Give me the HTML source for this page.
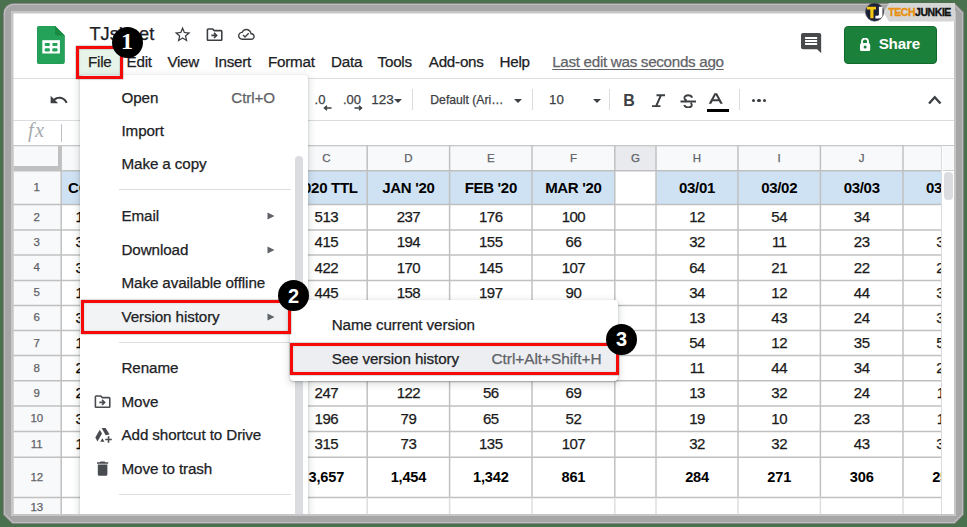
<!DOCTYPE html><html><head><meta charset="utf-8"><style>body{margin:0;width:967px;height:527px;overflow:hidden;position:relative;background:#4a714e;font-family:"Liberation Sans",sans-serif}div{box-sizing:border-box}</style></head><body>
<svg style="position:absolute;left:0;top:0" width="967" height="527" viewBox="0 0 967 527"><path d="M13.00 3.00H955.00L964.00 12.00V515.00L955.00 524.00H12.00L3.00 515.00V13.00A10.00 10.00 0 0 1 13.00 3.00Z" fill="#767676"/><path d="M13.32 3.80H954.52L963.20 12.48V514.52L954.52 523.20H12.48L3.80 514.52V13.32A9.52 9.52 0 0 1 13.32 3.80Z" fill="#bdbdbd"/><path d="M13.80 5.00H953.80L962.00 13.20V513.80L953.80 522.00H13.20L5.00 513.80V13.80A8.80 8.80 0 0 1 13.80 5.00Z" fill="#a6a6a6"/></svg>
<div style="position:absolute;left:11.40px;top:11.40px;width:944.80px;height:504.80px;background:#c6c6c6;"></div>
<div style="position:absolute;left:13.50px;top:13.80px;width:940.50px;height:500.20px;background:#fff;"></div>
<div style="position:absolute;left:0;top:0;width:967px;height:527px;clip-path:inset(13.5px 13px 13px 13.5px)">
<div style="position:absolute;left:13.00px;top:145.50px;width:947.00px;height:25.30px;background:#f8f9fa;"></div>
<div style="position:absolute;left:614.80px;top:145.50px;width:41.20px;height:25.30px;background:#e8eaed;"></div>
<div style="position:absolute;left:13.00px;top:170.80px;width:48.00px;height:356.20px;background:#f8f9fa;"></div>
<div style="position:absolute;left:61.00px;top:170.80px;width:553.80px;height:33.60px;background:#cfe2f3;"></div>
<div style="position:absolute;left:656.00px;top:170.80px;width:304.00px;height:33.60px;background:#cfe2f3;"></div>
<svg style="position:absolute;left:0;top:0" width="967" height="527" viewBox="0 0 967 527"><line x1="13" y1="145.4" x2="960" y2="145.4" stroke="#c0c0c0" stroke-width="1.5"/><line x1="13" y1="170.7" x2="960" y2="170.7" stroke="#c0c0c0" stroke-width="1.5"/><line x1="13" y1="204.4" x2="960" y2="204.4" stroke="#c0c0c0" stroke-width="1.5"/><line x1="13" y1="229.9" x2="960" y2="229.9" stroke="#c0c0c0" stroke-width="1.5"/><line x1="13" y1="255.0" x2="960" y2="255.0" stroke="#c0c0c0" stroke-width="1.5"/><line x1="13" y1="280.4" x2="960" y2="280.4" stroke="#c0c0c0" stroke-width="1.5"/><line x1="13" y1="305.5" x2="960" y2="305.5" stroke="#c0c0c0" stroke-width="1.5"/><line x1="13" y1="330.6" x2="960" y2="330.6" stroke="#c0c0c0" stroke-width="1.5"/><line x1="13" y1="355.6" x2="960" y2="355.6" stroke="#c0c0c0" stroke-width="1.5"/><line x1="13" y1="380.8" x2="960" y2="380.8" stroke="#c0c0c0" stroke-width="1.5"/><line x1="13" y1="406.1" x2="960" y2="406.1" stroke="#c0c0c0" stroke-width="1.5"/><line x1="13" y1="431.6" x2="960" y2="431.6" stroke="#c0c0c0" stroke-width="1.5"/><line x1="13" y1="457.2" x2="960" y2="457.2" stroke="#c0c0c0" stroke-width="1.5"/><line x1="13" y1="497.4" x2="960" y2="497.4" stroke="#c0c0c0" stroke-width="1.5"/><line x1="13" y1="523" x2="960" y2="523" stroke="#c0c0c0" stroke-width="1.5"/><line x1="13" y1="145.4" x2="13" y2="497.4" stroke="#c0c0c0" stroke-width="1.5"/><line x1="13" y1="497.4" x2="13" y2="527" stroke="#c0c0c0" stroke-width="1.5"/><line x1="61.2" y1="145.4" x2="61.2" y2="497.4" stroke="#c0c0c0" stroke-width="1.5"/><line x1="61.2" y1="497.4" x2="61.2" y2="527" stroke="#c0c0c0" stroke-width="1.5"/><line x1="200" y1="145.4" x2="200" y2="497.4" stroke="#c0c0c0" stroke-width="1.5"/><line x1="200" y1="497.4" x2="200" y2="527" stroke="#dedede" stroke-width="1.5"/><line x1="285.5" y1="145.4" x2="285.5" y2="497.4" stroke="#c0c0c0" stroke-width="1.5"/><line x1="285.5" y1="497.4" x2="285.5" y2="527" stroke="#dedede" stroke-width="1.5"/><line x1="367.2" y1="145.4" x2="367.2" y2="497.4" stroke="#c0c0c0" stroke-width="1.5"/><line x1="367.2" y1="497.4" x2="367.2" y2="527" stroke="#dedede" stroke-width="1.5"/><line x1="449.6" y1="145.4" x2="449.6" y2="497.4" stroke="#c0c0c0" stroke-width="1.5"/><line x1="449.6" y1="497.4" x2="449.6" y2="527" stroke="#dedede" stroke-width="1.5"/><line x1="532.0" y1="145.4" x2="532.0" y2="497.4" stroke="#c0c0c0" stroke-width="1.5"/><line x1="532.0" y1="497.4" x2="532.0" y2="527" stroke="#dedede" stroke-width="1.5"/><line x1="614.8" y1="145.4" x2="614.8" y2="497.4" stroke="#c0c0c0" stroke-width="1.5"/><line x1="614.8" y1="497.4" x2="614.8" y2="527" stroke="#dedede" stroke-width="1.5"/><line x1="656.0" y1="145.4" x2="656.0" y2="497.4" stroke="#c0c0c0" stroke-width="1.5"/><line x1="656.0" y1="497.4" x2="656.0" y2="527" stroke="#dedede" stroke-width="1.5"/><line x1="738.0" y1="145.4" x2="738.0" y2="497.4" stroke="#c0c0c0" stroke-width="1.5"/><line x1="738.0" y1="497.4" x2="738.0" y2="527" stroke="#dedede" stroke-width="1.5"/><line x1="820.4" y1="145.4" x2="820.4" y2="497.4" stroke="#c0c0c0" stroke-width="1.5"/><line x1="820.4" y1="497.4" x2="820.4" y2="527" stroke="#dedede" stroke-width="1.5"/><line x1="903.0" y1="145.4" x2="903.0" y2="497.4" stroke="#c0c0c0" stroke-width="1.5"/><line x1="903.0" y1="497.4" x2="903.0" y2="527" stroke="#dedede" stroke-width="1.5"/><line x1="985" y1="145.4" x2="985" y2="497.4" stroke="#c0c0c0" stroke-width="1.5"/><line x1="985" y1="497.4" x2="985" y2="527" stroke="#dedede" stroke-width="1.5"/></svg>
<div style="position:absolute;left:13.00px;top:166.00px;width:48.00px;height:4.00px;background:#c0c0c0;"></div>
<div style="position:absolute;left:57.50px;top:145.50px;width:3.50px;height:24.50px;background:#c0c0c0;"></div>
<div style="position:absolute;left:-69.40px;width:400px;text-align:center;top:152.72px;font-size:11.5px;line-height:11.5px;color:#5f6368;font-weight:normal;white-space:nowrap;font-family:'Liberation Sans', sans-serif;-webkit-text-stroke:0.25px currentColor;">A</div>
<div style="position:absolute;left:42.75px;width:400px;text-align:center;top:152.72px;font-size:11.5px;line-height:11.5px;color:#5f6368;font-weight:normal;white-space:nowrap;font-family:'Liberation Sans', sans-serif;-webkit-text-stroke:0.25px currentColor;">B</div>
<div style="position:absolute;left:126.35px;width:400px;text-align:center;top:152.72px;font-size:11.5px;line-height:11.5px;color:#5f6368;font-weight:normal;white-space:nowrap;font-family:'Liberation Sans', sans-serif;-webkit-text-stroke:0.25px currentColor;">C</div>
<div style="position:absolute;left:208.40px;width:400px;text-align:center;top:152.72px;font-size:11.5px;line-height:11.5px;color:#5f6368;font-weight:normal;white-space:nowrap;font-family:'Liberation Sans', sans-serif;-webkit-text-stroke:0.25px currentColor;">D</div>
<div style="position:absolute;left:290.80px;width:400px;text-align:center;top:152.72px;font-size:11.5px;line-height:11.5px;color:#5f6368;font-weight:normal;white-space:nowrap;font-family:'Liberation Sans', sans-serif;-webkit-text-stroke:0.25px currentColor;">E</div>
<div style="position:absolute;left:373.40px;width:400px;text-align:center;top:152.72px;font-size:11.5px;line-height:11.5px;color:#5f6368;font-weight:normal;white-space:nowrap;font-family:'Liberation Sans', sans-serif;-webkit-text-stroke:0.25px currentColor;">F</div>
<div style="position:absolute;left:435.40px;width:400px;text-align:center;top:152.72px;font-size:11.5px;line-height:11.5px;color:#5f6368;font-weight:normal;white-space:nowrap;font-family:'Liberation Sans', sans-serif;-webkit-text-stroke:0.25px currentColor;">G</div>
<div style="position:absolute;left:497.00px;width:400px;text-align:center;top:152.72px;font-size:11.5px;line-height:11.5px;color:#5f6368;font-weight:normal;white-space:nowrap;font-family:'Liberation Sans', sans-serif;-webkit-text-stroke:0.25px currentColor;">H</div>
<div style="position:absolute;left:579.20px;width:400px;text-align:center;top:152.72px;font-size:11.5px;line-height:11.5px;color:#5f6368;font-weight:normal;white-space:nowrap;font-family:'Liberation Sans', sans-serif;-webkit-text-stroke:0.25px currentColor;">I</div>
<div style="position:absolute;left:661.70px;width:400px;text-align:center;top:152.72px;font-size:11.5px;line-height:11.5px;color:#5f6368;font-weight:normal;white-space:nowrap;font-family:'Liberation Sans', sans-serif;-webkit-text-stroke:0.25px currentColor;">J</div>
<div style="position:absolute;left:-163.20px;width:400px;text-align:center;top:181.97px;font-size:11.5px;line-height:11.5px;color:#5f6368;font-weight:normal;white-space:nowrap;font-family:'Liberation Sans', sans-serif;-webkit-text-stroke:0.25px currentColor;">1</div>
<div style="position:absolute;left:-163.20px;width:400px;text-align:center;top:211.57px;font-size:11.5px;line-height:11.5px;color:#5f6368;font-weight:normal;white-space:nowrap;font-family:'Liberation Sans', sans-serif;-webkit-text-stroke:0.25px currentColor;">2</div>
<div style="position:absolute;left:-163.20px;width:400px;text-align:center;top:236.87px;font-size:11.5px;line-height:11.5px;color:#5f6368;font-weight:normal;white-space:nowrap;font-family:'Liberation Sans', sans-serif;-webkit-text-stroke:0.25px currentColor;">3</div>
<div style="position:absolute;left:-163.20px;width:400px;text-align:center;top:262.12px;font-size:11.5px;line-height:11.5px;color:#5f6368;font-weight:normal;white-space:nowrap;font-family:'Liberation Sans', sans-serif;-webkit-text-stroke:0.25px currentColor;">4</div>
<div style="position:absolute;left:-163.20px;width:400px;text-align:center;top:287.38px;font-size:11.5px;line-height:11.5px;color:#5f6368;font-weight:normal;white-space:nowrap;font-family:'Liberation Sans', sans-serif;-webkit-text-stroke:0.25px currentColor;">5</div>
<div style="position:absolute;left:-163.20px;width:400px;text-align:center;top:312.48px;font-size:11.5px;line-height:11.5px;color:#5f6368;font-weight:normal;white-space:nowrap;font-family:'Liberation Sans', sans-serif;-webkit-text-stroke:0.25px currentColor;">6</div>
<div style="position:absolute;left:-163.20px;width:400px;text-align:center;top:337.53px;font-size:11.5px;line-height:11.5px;color:#5f6368;font-weight:normal;white-space:nowrap;font-family:'Liberation Sans', sans-serif;-webkit-text-stroke:0.25px currentColor;">7</div>
<div style="position:absolute;left:-163.20px;width:400px;text-align:center;top:362.63px;font-size:11.5px;line-height:11.5px;color:#5f6368;font-weight:normal;white-space:nowrap;font-family:'Liberation Sans', sans-serif;-webkit-text-stroke:0.25px currentColor;">8</div>
<div style="position:absolute;left:-163.20px;width:400px;text-align:center;top:387.88px;font-size:11.5px;line-height:11.5px;color:#5f6368;font-weight:normal;white-space:nowrap;font-family:'Liberation Sans', sans-serif;-webkit-text-stroke:0.25px currentColor;">9</div>
<div style="position:absolute;left:-163.20px;width:400px;text-align:center;top:413.28px;font-size:11.5px;line-height:11.5px;color:#5f6368;font-weight:normal;white-space:nowrap;font-family:'Liberation Sans', sans-serif;-webkit-text-stroke:0.25px currentColor;">10</div>
<div style="position:absolute;left:-163.20px;width:400px;text-align:center;top:438.82px;font-size:11.5px;line-height:11.5px;color:#5f6368;font-weight:normal;white-space:nowrap;font-family:'Liberation Sans', sans-serif;-webkit-text-stroke:0.25px currentColor;">11</div>
<div style="position:absolute;left:-163.20px;width:400px;text-align:center;top:471.72px;font-size:11.5px;line-height:11.5px;color:#5f6368;font-weight:normal;white-space:nowrap;font-family:'Liberation Sans', sans-serif;-webkit-text-stroke:0.25px currentColor;">12</div>
<div style="position:absolute;left:-163.20px;width:400px;text-align:center;top:502.23px;font-size:11.5px;line-height:11.5px;color:#5f6368;font-weight:normal;white-space:nowrap;font-family:'Liberation Sans', sans-serif;-webkit-text-stroke:0.25px currentColor;">13</div>
<div style="position:absolute;left:68.00px;top:179.50px;font-size:15px;line-height:15px;color:#000;font-weight:bold;white-space:nowrap;font-family:'Liberation Sans', sans-serif;">CO</div>
<div style="position:absolute;left:126.35px;width:400px;text-align:center;top:180.00px;font-size:15px;line-height:15px;color:#000;font-weight:bold;white-space:nowrap;font-family:'Liberation Sans', sans-serif;letter-spacing:-0.3px;">2020 TTL</div>
<div style="position:absolute;left:208.40px;width:400px;text-align:center;top:180.00px;font-size:15px;line-height:15px;color:#000;font-weight:bold;white-space:nowrap;font-family:'Liberation Sans', sans-serif;letter-spacing:-0.3px;">JAN '20</div>
<div style="position:absolute;left:290.80px;width:400px;text-align:center;top:180.00px;font-size:15px;line-height:15px;color:#000;font-weight:bold;white-space:nowrap;font-family:'Liberation Sans', sans-serif;letter-spacing:-0.3px;">FEB '20</div>
<div style="position:absolute;left:373.40px;width:400px;text-align:center;top:180.00px;font-size:15px;line-height:15px;color:#000;font-weight:bold;white-space:nowrap;font-family:'Liberation Sans', sans-serif;letter-spacing:-0.3px;">MAR '20</div>
<div style="position:absolute;left:497.00px;width:400px;text-align:center;top:180.00px;font-size:15px;line-height:15px;color:#000;font-weight:bold;white-space:nowrap;font-family:'Liberation Sans', sans-serif;letter-spacing:-0.3px;">03/01</div>
<div style="position:absolute;left:579.20px;width:400px;text-align:center;top:180.00px;font-size:15px;line-height:15px;color:#000;font-weight:bold;white-space:nowrap;font-family:'Liberation Sans', sans-serif;letter-spacing:-0.3px;">03/02</div>
<div style="position:absolute;left:661.70px;width:400px;text-align:center;top:180.00px;font-size:15px;line-height:15px;color:#000;font-weight:bold;white-space:nowrap;font-family:'Liberation Sans', sans-serif;letter-spacing:-0.3px;">03/03</div>
<div style="position:absolute;left:744.00px;width:400px;text-align:center;top:180.00px;font-size:15px;line-height:15px;color:#000;font-weight:bold;white-space:nowrap;font-family:'Liberation Sans', sans-serif;letter-spacing:-0.3px;">03/04</div>
<div style="position:absolute;left:75.50px;top:209.10px;font-size:15px;line-height:15px;color:#000;font-weight:normal;white-space:nowrap;font-family:'Liberation Sans', sans-serif;-webkit-text-stroke:0.25px currentColor;">1</div>
<div style="position:absolute;left:126.35px;width:400px;text-align:center;top:209.10px;font-size:15px;line-height:15px;color:#1a1a1a;font-weight:normal;white-space:nowrap;font-family:'Liberation Sans', sans-serif;-webkit-text-stroke:0.25px currentColor;letter-spacing:-0.5px;">513</div>
<div style="position:absolute;left:208.40px;width:400px;text-align:center;top:209.10px;font-size:15px;line-height:15px;color:#1a1a1a;font-weight:normal;white-space:nowrap;font-family:'Liberation Sans', sans-serif;-webkit-text-stroke:0.25px currentColor;letter-spacing:-0.5px;">237</div>
<div style="position:absolute;left:290.80px;width:400px;text-align:center;top:209.10px;font-size:15px;line-height:15px;color:#1a1a1a;font-weight:normal;white-space:nowrap;font-family:'Liberation Sans', sans-serif;-webkit-text-stroke:0.25px currentColor;letter-spacing:-0.5px;">176</div>
<div style="position:absolute;left:373.40px;width:400px;text-align:center;top:209.10px;font-size:15px;line-height:15px;color:#1a1a1a;font-weight:normal;white-space:nowrap;font-family:'Liberation Sans', sans-serif;-webkit-text-stroke:0.25px currentColor;letter-spacing:-0.5px;">100</div>
<div style="position:absolute;left:497.00px;width:400px;text-align:center;top:209.10px;font-size:15px;line-height:15px;color:#1a1a1a;font-weight:normal;white-space:nowrap;font-family:'Liberation Sans', sans-serif;-webkit-text-stroke:0.25px currentColor;letter-spacing:-0.5px;">12</div>
<div style="position:absolute;left:579.20px;width:400px;text-align:center;top:209.10px;font-size:15px;line-height:15px;color:#1a1a1a;font-weight:normal;white-space:nowrap;font-family:'Liberation Sans', sans-serif;-webkit-text-stroke:0.25px currentColor;letter-spacing:-0.5px;">54</div>
<div style="position:absolute;left:661.70px;width:400px;text-align:center;top:209.10px;font-size:15px;line-height:15px;color:#1a1a1a;font-weight:normal;white-space:nowrap;font-family:'Liberation Sans', sans-serif;-webkit-text-stroke:0.25px currentColor;letter-spacing:-0.5px;">34</div>
<div style="position:absolute;left:75.50px;top:234.40px;font-size:15px;line-height:15px;color:#000;font-weight:normal;white-space:nowrap;font-family:'Liberation Sans', sans-serif;-webkit-text-stroke:0.25px currentColor;">3</div>
<div style="position:absolute;left:126.35px;width:400px;text-align:center;top:234.40px;font-size:15px;line-height:15px;color:#1a1a1a;font-weight:normal;white-space:nowrap;font-family:'Liberation Sans', sans-serif;-webkit-text-stroke:0.25px currentColor;letter-spacing:-0.5px;">415</div>
<div style="position:absolute;left:208.40px;width:400px;text-align:center;top:234.40px;font-size:15px;line-height:15px;color:#1a1a1a;font-weight:normal;white-space:nowrap;font-family:'Liberation Sans', sans-serif;-webkit-text-stroke:0.25px currentColor;letter-spacing:-0.5px;">194</div>
<div style="position:absolute;left:290.80px;width:400px;text-align:center;top:234.40px;font-size:15px;line-height:15px;color:#1a1a1a;font-weight:normal;white-space:nowrap;font-family:'Liberation Sans', sans-serif;-webkit-text-stroke:0.25px currentColor;letter-spacing:-0.5px;">155</div>
<div style="position:absolute;left:373.40px;width:400px;text-align:center;top:234.40px;font-size:15px;line-height:15px;color:#1a1a1a;font-weight:normal;white-space:nowrap;font-family:'Liberation Sans', sans-serif;-webkit-text-stroke:0.25px currentColor;letter-spacing:-0.5px;">66</div>
<div style="position:absolute;left:497.00px;width:400px;text-align:center;top:234.40px;font-size:15px;line-height:15px;color:#1a1a1a;font-weight:normal;white-space:nowrap;font-family:'Liberation Sans', sans-serif;-webkit-text-stroke:0.25px currentColor;letter-spacing:-0.5px;">32</div>
<div style="position:absolute;left:579.20px;width:400px;text-align:center;top:234.40px;font-size:15px;line-height:15px;color:#1a1a1a;font-weight:normal;white-space:nowrap;font-family:'Liberation Sans', sans-serif;-webkit-text-stroke:0.25px currentColor;letter-spacing:-0.5px;">11</div>
<div style="position:absolute;left:661.70px;width:400px;text-align:center;top:234.40px;font-size:15px;line-height:15px;color:#1a1a1a;font-weight:normal;white-space:nowrap;font-family:'Liberation Sans', sans-serif;-webkit-text-stroke:0.25px currentColor;letter-spacing:-0.5px;">23</div>
<div style="position:absolute;left:744.00px;width:400px;text-align:center;top:234.40px;font-size:15px;line-height:15px;color:#1a1a1a;font-weight:normal;white-space:nowrap;font-family:'Liberation Sans', sans-serif;-webkit-text-stroke:0.25px currentColor;letter-spacing:-0.5px;">33</div>
<div style="position:absolute;left:75.50px;top:259.65px;font-size:15px;line-height:15px;color:#000;font-weight:normal;white-space:nowrap;font-family:'Liberation Sans', sans-serif;-webkit-text-stroke:0.25px currentColor;">3</div>
<div style="position:absolute;left:126.35px;width:400px;text-align:center;top:259.65px;font-size:15px;line-height:15px;color:#1a1a1a;font-weight:normal;white-space:nowrap;font-family:'Liberation Sans', sans-serif;-webkit-text-stroke:0.25px currentColor;letter-spacing:-0.5px;">422</div>
<div style="position:absolute;left:208.40px;width:400px;text-align:center;top:259.65px;font-size:15px;line-height:15px;color:#1a1a1a;font-weight:normal;white-space:nowrap;font-family:'Liberation Sans', sans-serif;-webkit-text-stroke:0.25px currentColor;letter-spacing:-0.5px;">170</div>
<div style="position:absolute;left:290.80px;width:400px;text-align:center;top:259.65px;font-size:15px;line-height:15px;color:#1a1a1a;font-weight:normal;white-space:nowrap;font-family:'Liberation Sans', sans-serif;-webkit-text-stroke:0.25px currentColor;letter-spacing:-0.5px;">145</div>
<div style="position:absolute;left:373.40px;width:400px;text-align:center;top:259.65px;font-size:15px;line-height:15px;color:#1a1a1a;font-weight:normal;white-space:nowrap;font-family:'Liberation Sans', sans-serif;-webkit-text-stroke:0.25px currentColor;letter-spacing:-0.5px;">107</div>
<div style="position:absolute;left:497.00px;width:400px;text-align:center;top:259.65px;font-size:15px;line-height:15px;color:#1a1a1a;font-weight:normal;white-space:nowrap;font-family:'Liberation Sans', sans-serif;-webkit-text-stroke:0.25px currentColor;letter-spacing:-0.5px;">64</div>
<div style="position:absolute;left:579.20px;width:400px;text-align:center;top:259.65px;font-size:15px;line-height:15px;color:#1a1a1a;font-weight:normal;white-space:nowrap;font-family:'Liberation Sans', sans-serif;-webkit-text-stroke:0.25px currentColor;letter-spacing:-0.5px;">21</div>
<div style="position:absolute;left:661.70px;width:400px;text-align:center;top:259.65px;font-size:15px;line-height:15px;color:#1a1a1a;font-weight:normal;white-space:nowrap;font-family:'Liberation Sans', sans-serif;-webkit-text-stroke:0.25px currentColor;letter-spacing:-0.5px;">22</div>
<div style="position:absolute;left:744.00px;width:400px;text-align:center;top:259.65px;font-size:15px;line-height:15px;color:#1a1a1a;font-weight:normal;white-space:nowrap;font-family:'Liberation Sans', sans-serif;-webkit-text-stroke:0.25px currentColor;letter-spacing:-0.5px;">22</div>
<div style="position:absolute;left:75.50px;top:284.90px;font-size:15px;line-height:15px;color:#000;font-weight:normal;white-space:nowrap;font-family:'Liberation Sans', sans-serif;-webkit-text-stroke:0.25px currentColor;">1</div>
<div style="position:absolute;left:126.35px;width:400px;text-align:center;top:284.90px;font-size:15px;line-height:15px;color:#1a1a1a;font-weight:normal;white-space:nowrap;font-family:'Liberation Sans', sans-serif;-webkit-text-stroke:0.25px currentColor;letter-spacing:-0.5px;">445</div>
<div style="position:absolute;left:208.40px;width:400px;text-align:center;top:284.90px;font-size:15px;line-height:15px;color:#1a1a1a;font-weight:normal;white-space:nowrap;font-family:'Liberation Sans', sans-serif;-webkit-text-stroke:0.25px currentColor;letter-spacing:-0.5px;">158</div>
<div style="position:absolute;left:290.80px;width:400px;text-align:center;top:284.90px;font-size:15px;line-height:15px;color:#1a1a1a;font-weight:normal;white-space:nowrap;font-family:'Liberation Sans', sans-serif;-webkit-text-stroke:0.25px currentColor;letter-spacing:-0.5px;">197</div>
<div style="position:absolute;left:373.40px;width:400px;text-align:center;top:284.90px;font-size:15px;line-height:15px;color:#1a1a1a;font-weight:normal;white-space:nowrap;font-family:'Liberation Sans', sans-serif;-webkit-text-stroke:0.25px currentColor;letter-spacing:-0.5px;">90</div>
<div style="position:absolute;left:497.00px;width:400px;text-align:center;top:284.90px;font-size:15px;line-height:15px;color:#1a1a1a;font-weight:normal;white-space:nowrap;font-family:'Liberation Sans', sans-serif;-webkit-text-stroke:0.25px currentColor;letter-spacing:-0.5px;">34</div>
<div style="position:absolute;left:579.20px;width:400px;text-align:center;top:284.90px;font-size:15px;line-height:15px;color:#1a1a1a;font-weight:normal;white-space:nowrap;font-family:'Liberation Sans', sans-serif;-webkit-text-stroke:0.25px currentColor;letter-spacing:-0.5px;">12</div>
<div style="position:absolute;left:661.70px;width:400px;text-align:center;top:284.90px;font-size:15px;line-height:15px;color:#1a1a1a;font-weight:normal;white-space:nowrap;font-family:'Liberation Sans', sans-serif;-webkit-text-stroke:0.25px currentColor;letter-spacing:-0.5px;">44</div>
<div style="position:absolute;left:744.00px;width:400px;text-align:center;top:284.90px;font-size:15px;line-height:15px;color:#1a1a1a;font-weight:normal;white-space:nowrap;font-family:'Liberation Sans', sans-serif;-webkit-text-stroke:0.25px currentColor;letter-spacing:-0.5px;">33</div>
<div style="position:absolute;left:75.50px;top:310.00px;font-size:15px;line-height:15px;color:#000;font-weight:normal;white-space:nowrap;font-family:'Liberation Sans', sans-serif;-webkit-text-stroke:0.25px currentColor;">3</div>
<div style="position:absolute;left:497.00px;width:400px;text-align:center;top:310.00px;font-size:15px;line-height:15px;color:#1a1a1a;font-weight:normal;white-space:nowrap;font-family:'Liberation Sans', sans-serif;-webkit-text-stroke:0.25px currentColor;letter-spacing:-0.5px;">13</div>
<div style="position:absolute;left:579.20px;width:400px;text-align:center;top:310.00px;font-size:15px;line-height:15px;color:#1a1a1a;font-weight:normal;white-space:nowrap;font-family:'Liberation Sans', sans-serif;-webkit-text-stroke:0.25px currentColor;letter-spacing:-0.5px;">43</div>
<div style="position:absolute;left:661.70px;width:400px;text-align:center;top:310.00px;font-size:15px;line-height:15px;color:#1a1a1a;font-weight:normal;white-space:nowrap;font-family:'Liberation Sans', sans-serif;-webkit-text-stroke:0.25px currentColor;letter-spacing:-0.5px;">24</div>
<div style="position:absolute;left:744.00px;width:400px;text-align:center;top:310.00px;font-size:15px;line-height:15px;color:#1a1a1a;font-weight:normal;white-space:nowrap;font-family:'Liberation Sans', sans-serif;-webkit-text-stroke:0.25px currentColor;letter-spacing:-0.5px;">33</div>
<div style="position:absolute;left:75.50px;top:335.05px;font-size:15px;line-height:15px;color:#000;font-weight:normal;white-space:nowrap;font-family:'Liberation Sans', sans-serif;-webkit-text-stroke:0.25px currentColor;">1</div>
<div style="position:absolute;left:497.00px;width:400px;text-align:center;top:335.05px;font-size:15px;line-height:15px;color:#1a1a1a;font-weight:normal;white-space:nowrap;font-family:'Liberation Sans', sans-serif;-webkit-text-stroke:0.25px currentColor;letter-spacing:-0.5px;">54</div>
<div style="position:absolute;left:579.20px;width:400px;text-align:center;top:335.05px;font-size:15px;line-height:15px;color:#1a1a1a;font-weight:normal;white-space:nowrap;font-family:'Liberation Sans', sans-serif;-webkit-text-stroke:0.25px currentColor;letter-spacing:-0.5px;">12</div>
<div style="position:absolute;left:661.70px;width:400px;text-align:center;top:335.05px;font-size:15px;line-height:15px;color:#1a1a1a;font-weight:normal;white-space:nowrap;font-family:'Liberation Sans', sans-serif;-webkit-text-stroke:0.25px currentColor;letter-spacing:-0.5px;">35</div>
<div style="position:absolute;left:744.00px;width:400px;text-align:center;top:335.05px;font-size:15px;line-height:15px;color:#1a1a1a;font-weight:normal;white-space:nowrap;font-family:'Liberation Sans', sans-serif;-webkit-text-stroke:0.25px currentColor;letter-spacing:-0.5px;">55</div>
<div style="position:absolute;left:75.50px;top:360.15px;font-size:15px;line-height:15px;color:#000;font-weight:normal;white-space:nowrap;font-family:'Liberation Sans', sans-serif;-webkit-text-stroke:0.25px currentColor;">2</div>
<div style="position:absolute;left:497.00px;width:400px;text-align:center;top:360.15px;font-size:15px;line-height:15px;color:#1a1a1a;font-weight:normal;white-space:nowrap;font-family:'Liberation Sans', sans-serif;-webkit-text-stroke:0.25px currentColor;letter-spacing:-0.5px;">11</div>
<div style="position:absolute;left:579.20px;width:400px;text-align:center;top:360.15px;font-size:15px;line-height:15px;color:#1a1a1a;font-weight:normal;white-space:nowrap;font-family:'Liberation Sans', sans-serif;-webkit-text-stroke:0.25px currentColor;letter-spacing:-0.5px;">44</div>
<div style="position:absolute;left:661.70px;width:400px;text-align:center;top:360.15px;font-size:15px;line-height:15px;color:#1a1a1a;font-weight:normal;white-space:nowrap;font-family:'Liberation Sans', sans-serif;-webkit-text-stroke:0.25px currentColor;letter-spacing:-0.5px;">34</div>
<div style="position:absolute;left:744.00px;width:400px;text-align:center;top:360.15px;font-size:15px;line-height:15px;color:#1a1a1a;font-weight:normal;white-space:nowrap;font-family:'Liberation Sans', sans-serif;-webkit-text-stroke:0.25px currentColor;letter-spacing:-0.5px;">22</div>
<div style="position:absolute;left:75.50px;top:385.40px;font-size:15px;line-height:15px;color:#000;font-weight:normal;white-space:nowrap;font-family:'Liberation Sans', sans-serif;-webkit-text-stroke:0.25px currentColor;">2</div>
<div style="position:absolute;left:126.35px;width:400px;text-align:center;top:385.40px;font-size:15px;line-height:15px;color:#1a1a1a;font-weight:normal;white-space:nowrap;font-family:'Liberation Sans', sans-serif;-webkit-text-stroke:0.25px currentColor;letter-spacing:-0.5px;">247</div>
<div style="position:absolute;left:208.40px;width:400px;text-align:center;top:385.40px;font-size:15px;line-height:15px;color:#1a1a1a;font-weight:normal;white-space:nowrap;font-family:'Liberation Sans', sans-serif;-webkit-text-stroke:0.25px currentColor;letter-spacing:-0.5px;">122</div>
<div style="position:absolute;left:290.80px;width:400px;text-align:center;top:385.40px;font-size:15px;line-height:15px;color:#1a1a1a;font-weight:normal;white-space:nowrap;font-family:'Liberation Sans', sans-serif;-webkit-text-stroke:0.25px currentColor;letter-spacing:-0.5px;">56</div>
<div style="position:absolute;left:373.40px;width:400px;text-align:center;top:385.40px;font-size:15px;line-height:15px;color:#1a1a1a;font-weight:normal;white-space:nowrap;font-family:'Liberation Sans', sans-serif;-webkit-text-stroke:0.25px currentColor;letter-spacing:-0.5px;">69</div>
<div style="position:absolute;left:497.00px;width:400px;text-align:center;top:385.40px;font-size:15px;line-height:15px;color:#1a1a1a;font-weight:normal;white-space:nowrap;font-family:'Liberation Sans', sans-serif;-webkit-text-stroke:0.25px currentColor;letter-spacing:-0.5px;">13</div>
<div style="position:absolute;left:579.20px;width:400px;text-align:center;top:385.40px;font-size:15px;line-height:15px;color:#1a1a1a;font-weight:normal;white-space:nowrap;font-family:'Liberation Sans', sans-serif;-webkit-text-stroke:0.25px currentColor;letter-spacing:-0.5px;">32</div>
<div style="position:absolute;left:661.70px;width:400px;text-align:center;top:385.40px;font-size:15px;line-height:15px;color:#1a1a1a;font-weight:normal;white-space:nowrap;font-family:'Liberation Sans', sans-serif;-webkit-text-stroke:0.25px currentColor;letter-spacing:-0.5px;">24</div>
<div style="position:absolute;left:744.00px;width:400px;text-align:center;top:385.40px;font-size:15px;line-height:15px;color:#1a1a1a;font-weight:normal;white-space:nowrap;font-family:'Liberation Sans', sans-serif;-webkit-text-stroke:0.25px currentColor;letter-spacing:-0.5px;">11</div>
<div style="position:absolute;left:75.50px;top:410.80px;font-size:15px;line-height:15px;color:#000;font-weight:normal;white-space:nowrap;font-family:'Liberation Sans', sans-serif;-webkit-text-stroke:0.25px currentColor;">3</div>
<div style="position:absolute;left:126.35px;width:400px;text-align:center;top:410.80px;font-size:15px;line-height:15px;color:#1a1a1a;font-weight:normal;white-space:nowrap;font-family:'Liberation Sans', sans-serif;-webkit-text-stroke:0.25px currentColor;letter-spacing:-0.5px;">196</div>
<div style="position:absolute;left:208.40px;width:400px;text-align:center;top:410.80px;font-size:15px;line-height:15px;color:#1a1a1a;font-weight:normal;white-space:nowrap;font-family:'Liberation Sans', sans-serif;-webkit-text-stroke:0.25px currentColor;letter-spacing:-0.5px;">79</div>
<div style="position:absolute;left:290.80px;width:400px;text-align:center;top:410.80px;font-size:15px;line-height:15px;color:#1a1a1a;font-weight:normal;white-space:nowrap;font-family:'Liberation Sans', sans-serif;-webkit-text-stroke:0.25px currentColor;letter-spacing:-0.5px;">65</div>
<div style="position:absolute;left:373.40px;width:400px;text-align:center;top:410.80px;font-size:15px;line-height:15px;color:#1a1a1a;font-weight:normal;white-space:nowrap;font-family:'Liberation Sans', sans-serif;-webkit-text-stroke:0.25px currentColor;letter-spacing:-0.5px;">52</div>
<div style="position:absolute;left:497.00px;width:400px;text-align:center;top:410.80px;font-size:15px;line-height:15px;color:#1a1a1a;font-weight:normal;white-space:nowrap;font-family:'Liberation Sans', sans-serif;-webkit-text-stroke:0.25px currentColor;letter-spacing:-0.5px;">19</div>
<div style="position:absolute;left:579.20px;width:400px;text-align:center;top:410.80px;font-size:15px;line-height:15px;color:#1a1a1a;font-weight:normal;white-space:nowrap;font-family:'Liberation Sans', sans-serif;-webkit-text-stroke:0.25px currentColor;letter-spacing:-0.5px;">10</div>
<div style="position:absolute;left:661.70px;width:400px;text-align:center;top:410.80px;font-size:15px;line-height:15px;color:#1a1a1a;font-weight:normal;white-space:nowrap;font-family:'Liberation Sans', sans-serif;-webkit-text-stroke:0.25px currentColor;letter-spacing:-0.5px;">23</div>
<div style="position:absolute;left:744.00px;width:400px;text-align:center;top:410.80px;font-size:15px;line-height:15px;color:#1a1a1a;font-weight:normal;white-space:nowrap;font-family:'Liberation Sans', sans-serif;-webkit-text-stroke:0.25px currentColor;letter-spacing:-0.5px;">11</div>
<div style="position:absolute;left:75.50px;top:436.35px;font-size:15px;line-height:15px;color:#000;font-weight:normal;white-space:nowrap;font-family:'Liberation Sans', sans-serif;-webkit-text-stroke:0.25px currentColor;">1</div>
<div style="position:absolute;left:126.35px;width:400px;text-align:center;top:436.35px;font-size:15px;line-height:15px;color:#1a1a1a;font-weight:normal;white-space:nowrap;font-family:'Liberation Sans', sans-serif;-webkit-text-stroke:0.25px currentColor;letter-spacing:-0.5px;">315</div>
<div style="position:absolute;left:208.40px;width:400px;text-align:center;top:436.35px;font-size:15px;line-height:15px;color:#1a1a1a;font-weight:normal;white-space:nowrap;font-family:'Liberation Sans', sans-serif;-webkit-text-stroke:0.25px currentColor;letter-spacing:-0.5px;">73</div>
<div style="position:absolute;left:290.80px;width:400px;text-align:center;top:436.35px;font-size:15px;line-height:15px;color:#1a1a1a;font-weight:normal;white-space:nowrap;font-family:'Liberation Sans', sans-serif;-webkit-text-stroke:0.25px currentColor;letter-spacing:-0.5px;">135</div>
<div style="position:absolute;left:373.40px;width:400px;text-align:center;top:436.35px;font-size:15px;line-height:15px;color:#1a1a1a;font-weight:normal;white-space:nowrap;font-family:'Liberation Sans', sans-serif;-webkit-text-stroke:0.25px currentColor;letter-spacing:-0.5px;">107</div>
<div style="position:absolute;left:497.00px;width:400px;text-align:center;top:436.35px;font-size:15px;line-height:15px;color:#1a1a1a;font-weight:normal;white-space:nowrap;font-family:'Liberation Sans', sans-serif;-webkit-text-stroke:0.25px currentColor;letter-spacing:-0.5px;">32</div>
<div style="position:absolute;left:579.20px;width:400px;text-align:center;top:436.35px;font-size:15px;line-height:15px;color:#1a1a1a;font-weight:normal;white-space:nowrap;font-family:'Liberation Sans', sans-serif;-webkit-text-stroke:0.25px currentColor;letter-spacing:-0.5px;">32</div>
<div style="position:absolute;left:661.70px;width:400px;text-align:center;top:436.35px;font-size:15px;line-height:15px;color:#1a1a1a;font-weight:normal;white-space:nowrap;font-family:'Liberation Sans', sans-serif;-webkit-text-stroke:0.25px currentColor;letter-spacing:-0.5px;">43</div>
<div style="position:absolute;left:744.00px;width:400px;text-align:center;top:436.35px;font-size:15px;line-height:15px;color:#1a1a1a;font-weight:normal;white-space:nowrap;font-family:'Liberation Sans', sans-serif;-webkit-text-stroke:0.25px currentColor;letter-spacing:-0.5px;">33</div>
<div style="position:absolute;left:126.35px;width:400px;text-align:center;top:470.19px;font-size:14.6px;line-height:14.6px;color:#000;font-weight:bold;white-space:nowrap;font-family:'Liberation Sans', sans-serif;letter-spacing:-0.2px;">3,657</div>
<div style="position:absolute;left:208.40px;width:400px;text-align:center;top:470.19px;font-size:14.6px;line-height:14.6px;color:#000;font-weight:bold;white-space:nowrap;font-family:'Liberation Sans', sans-serif;letter-spacing:-0.2px;">1,454</div>
<div style="position:absolute;left:290.80px;width:400px;text-align:center;top:470.19px;font-size:14.6px;line-height:14.6px;color:#000;font-weight:bold;white-space:nowrap;font-family:'Liberation Sans', sans-serif;letter-spacing:-0.2px;">1,342</div>
<div style="position:absolute;left:373.40px;width:400px;text-align:center;top:470.19px;font-size:14.6px;line-height:14.6px;color:#000;font-weight:bold;white-space:nowrap;font-family:'Liberation Sans', sans-serif;letter-spacing:-0.2px;">861</div>
<div style="position:absolute;left:497.00px;width:400px;text-align:center;top:470.19px;font-size:14.6px;line-height:14.6px;color:#000;font-weight:bold;white-space:nowrap;font-family:'Liberation Sans', sans-serif;letter-spacing:-0.2px;">284</div>
<div style="position:absolute;left:579.20px;width:400px;text-align:center;top:470.19px;font-size:14.6px;line-height:14.6px;color:#000;font-weight:bold;white-space:nowrap;font-family:'Liberation Sans', sans-serif;letter-spacing:-0.2px;">271</div>
<div style="position:absolute;left:661.70px;width:400px;text-align:center;top:470.19px;font-size:14.6px;line-height:14.6px;color:#000;font-weight:bold;white-space:nowrap;font-family:'Liberation Sans', sans-serif;letter-spacing:-0.2px;">306</div>
<div style="position:absolute;left:744.00px;width:400px;text-align:center;top:470.19px;font-size:14.6px;line-height:14.6px;color:#000;font-weight:bold;white-space:nowrap;font-family:'Liberation Sans', sans-serif;letter-spacing:-0.2px;">255</div>
<div style="position:absolute;left:941.30px;top:145.40px;width:12.70px;height:368.60px;background:#fff;border-left:1.2px solid #dadce0;"></div>
<div style="position:absolute;left:942.50px;top:146.00px;width:11.50px;height:24.70px;background:#f8f9fa;border-bottom:1.2px solid #d0d0d0;"></div>
<div style="position:absolute;left:943.50px;top:172.00px;width:9.00px;height:28.00px;background:#dadce0;border-radius:4px;"></div>
<div style="position:absolute;left:13.00px;top:13.00px;width:947.00px;height:65.00px;background:#fff;"></div>
<div style="position:absolute;left:13.00px;top:78.00px;width:947.00px;height:1.00px;background:#dadce0;"></div>
<div style="position:absolute;left:13.00px;top:79.00px;width:947.00px;height:41.00px;background:#fff;"></div>
<div style="position:absolute;left:13.00px;top:120.00px;width:947.00px;height:1.00px;background:#dadce0;"></div>
<div style="position:absolute;left:13.00px;top:121.00px;width:947.00px;height:24.50px;background:#fff;"></div>
<div style="position:absolute;left:13.00px;top:145.20px;width:947.00px;height:1.00px;background:#c7c7c7;"></div>
<svg style="position:absolute;left:37px;top:25.7px" width="28" height="38" viewBox="0 0 28 38"><path d="M2.5 0H18L27.6 9.6V35.5A2.5 2.5 0 0 1 25.1 38H2.5A2.5 2.5 0 0 1 0 35.5V2.5A2.5 2.5 0 0 1 2.5 0Z" fill="#25a259" stroke="#1f9150" stroke-width="0.6"/><path d="M18 0L27.6 9.6H20.5A2.5 2.5 0 0 1 18 7.1Z" fill="#188a42"/><rect x="5.3" y="14.2" width="17.6" height="13.3" fill="#fff"/><rect x="7.7" y="17" width="5.2" height="2.9" rx="1" fill="#25a259"/><rect x="15.3" y="17" width="5.2" height="2.9" rx="1" fill="#25a259"/><rect x="7.7" y="22.3" width="5.2" height="3.3" rx="1" fill="#25a259"/><rect x="15.3" y="22.3" width="5.2" height="3.3" rx="1" fill="#25a259"/></svg>
<div style="position:absolute;left:89.50px;top:24.73px;font-size:18.2px;line-height:18.2px;color:#202124;font-weight:normal;white-space:nowrap;font-family:'Liberation Sans', sans-serif;-webkit-text-stroke:0.25px currentColor;">TJsheet</div>
<svg style="position:absolute;left:173.4px;top:25.1px" width="19.2" height="19.2" viewBox="0 0 24 24"><path fill="#3c4043" d="M22 9.24l-7.19-.62L12 2 9.19 8.63 2 9.24l5.46 4.73L5.82 21 12 17.27 18.18 21l-1.63-7.03L22 9.24zM12 15.4l-3.76 2.27 1-4.28-3.32-2.88 4.38-.38L12 6.1l1.71 4.04 4.38.38-3.32 2.88 1 4.28L12 15.4z"/></svg>
<svg style="position:absolute;left:204.7px;top:24.8px" width="19.2" height="19.2" viewBox="0 0 24 24"><path fill="#3c4043" d="M20 6h-8l-2-2H4c-1.1 0-1.99.9-1.99 2L2 18c0 1.1.9 2 2 2h16c1.1 0 2-.9 2-2V8c0-1.1-.9-2-2-2zm0 12H4V6h5.17l2 2H20v10zm-7.84-6H8v2h4.16l-1.59 1.59L11.99 17 16 13.01 11.99 9l-1.41 1.41L12.16 12z"/></svg>
<svg style="position:absolute;left:238px;top:26.2px" width="16.8" height="16.8" viewBox="0 0 24 24"><path fill="#3c4043" d="M19.35 10.04C18.670 6.59 15.64 4 12 4 9.11 4 6.6 5.64 5.35 8.04 2.34 8.36 0 10.91 0 14c0 3.31 2.69 6 6 6h13c2.76 0 5-2.240 5-5 0-2.64-2.05-4.78-4.65-4.96zM19 18H6c-2.21 0-4-1.79-4-4 0-2.05 1.53-3.76 3.56-3.970l1.07-.11.5-.95C8.08 7.14 9.94 6 12 6c2.62 0 4.88 1.86 5.39 4.43l.3 1.5 1.53.11c1.56.1 2.78 1.41 2.78 2.96 0 1.65-1.35 3-3 3zm-9-3.82l-2.09-2.09L6.5 13.5 10 17l6.01-6.01-1.41-1.41z"/></svg>
<div style="position:absolute;left:76.00px;top:46.00px;width:47.00px;height:33.00px;background:#e6f4ea;"></div>
<div style="position:absolute;left:88.00px;top:54.48px;font-size:15.2px;line-height:15.2px;color:#202124;font-weight:normal;white-space:nowrap;font-family:'Liberation Sans', sans-serif;-webkit-text-stroke:0.25px currentColor;letter-spacing:-0.25px;">File</div>
<div style="position:absolute;left:126.60px;top:54.48px;font-size:15.2px;line-height:15.2px;color:#202124;font-weight:normal;white-space:nowrap;font-family:'Liberation Sans', sans-serif;-webkit-text-stroke:0.25px currentColor;letter-spacing:-0.25px;">Edit</div>
<div style="position:absolute;left:167.40px;top:54.48px;font-size:15.2px;line-height:15.2px;color:#202124;font-weight:normal;white-space:nowrap;font-family:'Liberation Sans', sans-serif;-webkit-text-stroke:0.25px currentColor;letter-spacing:-0.25px;">View</div>
<div style="position:absolute;left:214.60px;top:54.48px;font-size:15.2px;line-height:15.2px;color:#202124;font-weight:normal;white-space:nowrap;font-family:'Liberation Sans', sans-serif;-webkit-text-stroke:0.25px currentColor;letter-spacing:-0.25px;">Insert</div>
<div style="position:absolute;left:268.00px;top:54.48px;font-size:15.2px;line-height:15.2px;color:#202124;font-weight:normal;white-space:nowrap;font-family:'Liberation Sans', sans-serif;-webkit-text-stroke:0.25px currentColor;letter-spacing:-0.25px;">Format</div>
<div style="position:absolute;left:331.00px;top:54.48px;font-size:15.2px;line-height:15.2px;color:#202124;font-weight:normal;white-space:nowrap;font-family:'Liberation Sans', sans-serif;-webkit-text-stroke:0.25px currentColor;letter-spacing:-0.25px;">Data</div>
<div style="position:absolute;left:377.60px;top:54.48px;font-size:15.2px;line-height:15.2px;color:#202124;font-weight:normal;white-space:nowrap;font-family:'Liberation Sans', sans-serif;-webkit-text-stroke:0.25px currentColor;letter-spacing:-0.25px;">Tools</div>
<div style="position:absolute;left:428.80px;top:54.48px;font-size:15.2px;line-height:15.2px;color:#202124;font-weight:normal;white-space:nowrap;font-family:'Liberation Sans', sans-serif;-webkit-text-stroke:0.25px currentColor;letter-spacing:-0.25px;">Add-ons</div>
<div style="position:absolute;left:499.50px;top:54.48px;font-size:15.2px;line-height:15.2px;color:#202124;font-weight:normal;white-space:nowrap;font-family:'Liberation Sans', sans-serif;-webkit-text-stroke:0.25px currentColor;letter-spacing:-0.25px;">Help</div>
<div style="position:absolute;left:552.20px;top:54.48px;font-size:15.2px;line-height:15.2px;color:#5f6368;font-weight:normal;white-space:nowrap;font-family:'Liberation Sans', sans-serif;-webkit-text-stroke:0.25px currentColor;letter-spacing:-0.3px;text-decoration:underline;text-underline-offset:2px;">Last edit was seconds ago</div>
<svg style="position:absolute;left:799.4px;top:31.3px" width="24.2" height="24.2" viewBox="0 0 24 24"><path fill="#48494b" d="M21.99 4c0-1.1-.89-2-1.99-2H4c-1.1 0-2 .9-2 2v12c0 1.1.9 2 2 2h14l4 4-.01-18zM18 14H6v-2h12v2zm0-3H6V9h12v2zm0-3H6V6h12v2z"/></svg>
<div style="position:absolute;left:844.20px;top:26.20px;width:92.60px;height:37.60px;background:#1b8039;border:1px solid #116a2c;border-radius:4px;"></div>
<svg style="position:absolute;left:858.5px;top:37.5px" width="12" height="13.5" viewBox="0 0 12 13.5"><path d="M3 5.5V3.6A3 3 0 0 1 9 3.6V5.5" fill="none" stroke="#fff" stroke-width="1.9"/><rect x="1" y="5" width="10.2" height="8.2" rx="2" fill="#fff"/><circle cx="6.1" cy="8.9" r="1.5" fill="#1b8039"/></svg>
<div style="position:absolute;left:878.70px;top:36.28px;font-size:15.2px;line-height:15.2px;color:#fff;font-weight:bold;white-space:nowrap;font-family:'Liberation Sans', sans-serif;letter-spacing:-0.2px;">Share</div>
<svg style="position:absolute;left:49px;top:89.5px" width="19.9" height="19.9" viewBox="0 0 24 24"><path fill="#3c4043" d="M12.5 8c-2.65 0-5.05.99-6.9 2.6L2 7v9h9l-3.62-3.62c1.39-1.16 3.16-1.88 5.12-1.88 3.54 0 6.55 2.31 7.6 5.5l2.37-.78C21.08 11.03 17.15 8 12.5 8z"/></svg>
<div style="position:absolute;left:314.60px;top:93.25px;font-size:13px;line-height:13px;color:#3c4043;font-weight:normal;white-space:nowrap;font-family:'Liberation Sans', sans-serif;-webkit-text-stroke:0.25px currentColor;">.0</div>
<svg style="position:absolute;left:322.5px;top:105px" width="9" height="6" viewBox="0 0 9 6"><path d="M8.5 3H2M4 0.8L1.5 3L4 5.2" fill="none" stroke="#3c4043" stroke-width="1.5"/></svg>
<div style="position:absolute;left:343.00px;top:93.25px;font-size:13px;line-height:13px;color:#3c4043;font-weight:normal;white-space:nowrap;font-family:'Liberation Sans', sans-serif;-webkit-text-stroke:0.25px currentColor;">.00</div>
<svg style="position:absolute;left:353.5px;top:105px" width="9" height="6" viewBox="0 0 9 6"><path d="M0.5 3H7M5 0.8L7.5 3L5 5.2" fill="none" stroke="#3c4043" stroke-width="1.5"/></svg>
<div style="position:absolute;left:371.20px;top:92.83px;font-size:13.5px;line-height:13.5px;color:#3c4043;font-weight:normal;white-space:nowrap;font-family:'Liberation Sans', sans-serif;-webkit-text-stroke:0.25px currentColor;">123</div>
<svg style="position:absolute;left:394px;top:99px" width="8" height="4" viewBox="0 0 8 4"><path d="M0 0H8L4 4Z" fill="#3c4043"/></svg>
<div style="position:absolute;left:411.80px;top:89.00px;width:1.00px;height:21.00px;background:#dadce0;"></div>
<div style="position:absolute;left:430.30px;top:93.93px;font-size:12.2px;line-height:12.2px;color:#3c4043;font-weight:normal;white-space:nowrap;font-family:'Liberation Sans', sans-serif;-webkit-text-stroke:0.25px currentColor;">Default (Ari…</div>
<svg style="position:absolute;left:514px;top:99px" width="8" height="4" viewBox="0 0 8 4"><path d="M0 0H8L4 4Z" fill="#3c4043"/></svg>
<div style="position:absolute;left:532.00px;top:89.00px;width:1.00px;height:21.00px;background:#dadce0;"></div>
<div style="position:absolute;left:549.00px;top:93.00px;font-size:13.3px;line-height:13.3px;color:#3c4043;font-weight:normal;white-space:nowrap;font-family:'Liberation Sans', sans-serif;-webkit-text-stroke:0.25px currentColor;">10</div>
<svg style="position:absolute;left:593px;top:99px" width="8" height="4" viewBox="0 0 8 4"><path d="M0 0H8L4 4Z" fill="#3c4043"/></svg>
<div style="position:absolute;left:609.40px;top:89.00px;width:1.00px;height:21.00px;background:#dadce0;"></div>
<div style="position:absolute;left:623.30px;top:93.20px;font-size:16px;line-height:16px;color:#3c4043;font-weight:bold;white-space:nowrap;font-family:'Liberation Sans', sans-serif;">B</div>
<svg style="position:absolute;left:651px;top:93.5px" width="15" height="13.5" viewBox="0 0 15 13.5"><path d="M5.5 1.2H14M1 12.3H9.5M10 1.2L5 12.3" fill="none" stroke="#3c4043" stroke-width="2"/></svg>
<svg style="position:absolute;left:680px;top:93.5px" width="16.5" height="14.5" viewBox="0 0 16.5 14.5"><path d="M12.2 3.6C11.6 2 10.2 1.2 8.2 1.2C5.8 1.2 4.4 2.4 4.4 4C4.4 5.3 5.3 6 6.8 6.5M0.5 7.5H16M10.6 9C11.4 9.6 11.8 10.2 11.8 11C11.8 12.5 10.4 13.4 8.2 13.4C6.2 13.4 4.8 12.6 4.2 11" fill="none" stroke="#3c4043" stroke-width="1.9"/></svg>
<svg style="position:absolute;left:708px;top:93px" width="15.5" height="11" viewBox="0 0 15.5 11"><path d="M0.7 10.8L6.4 0.3H9.1L14.8 10.8H12.2L10.9 8.3H4.6L3.3 10.8ZM5.5 6.2H10L7.75 2.1Z" fill="#3c4043"/></svg>
<div style="position:absolute;left:707.00px;top:108.50px;width:22.30px;height:3.80px;background:#000;"></div>
<div style="position:absolute;left:738.60px;top:89.00px;width:1.00px;height:21.00px;background:#dadce0;"></div>
<div style="position:absolute;left:751.9px;top:98.7px;width:3.2px;height:3.2px;border-radius:50%;background:#3c4043"></div>
<div style="position:absolute;left:757.4px;top:98.7px;width:3.2px;height:3.2px;border-radius:50%;background:#3c4043"></div>
<div style="position:absolute;left:762.9px;top:98.7px;width:3.2px;height:3.2px;border-radius:50%;background:#3c4043"></div>
<svg style="position:absolute;left:928px;top:94.5px" width="13.5" height="9.5" viewBox="0 0 13.5 9.5"><path d="M1 8.5L6.75 2.2L12.5 8.5" fill="none" stroke="#3c4043" stroke-width="2.3"/></svg>
<div style="position:absolute;left:28.00px;top:120.38px;font-size:20.5px;line-height:20.5px;color:#a8abaf;font-weight:normal;white-space:nowrap;font-family:'Liberation Serif', serif;-webkit-text-stroke:0.25px currentColor;font-style:italic;-webkit-text-stroke:0;letter-spacing:1.3px;">fx</div>
<div style="position:absolute;left:60.50px;top:124.00px;width:1.20px;height:18.00px;background:#bdc1c6;"></div>
<div style="position:absolute;left:80.00px;top:74.50px;width:227.80px;height:465.50px;background:#fff;border-radius:4px;box-shadow:0 2px 6px 2px rgba(60,64,67,.15),0 1px 2px rgba(60,64,67,.3);"></div>
<div style="position:absolute;left:294.50px;top:155.60px;width:8.50px;height:404.40px;background:#dadce0;border-radius:4px;"></div>
<div style="position:absolute;left:121.50px;top:89.58px;font-size:15.2px;line-height:15.2px;color:#202124;font-weight:normal;white-space:nowrap;font-family:'Liberation Sans', sans-serif;-webkit-text-stroke:0.25px currentColor;letter-spacing:-0.1px;">Open</div>
<div style="position:absolute;left:121.50px;top:122.98px;font-size:15.2px;line-height:15.2px;color:#202124;font-weight:normal;white-space:nowrap;font-family:'Liberation Sans', sans-serif;-webkit-text-stroke:0.25px currentColor;letter-spacing:-0.1px;">Import</div>
<div style="position:absolute;left:121.50px;top:156.38px;font-size:15.2px;line-height:15.2px;color:#202124;font-weight:normal;white-space:nowrap;font-family:'Liberation Sans', sans-serif;-webkit-text-stroke:0.25px currentColor;letter-spacing:-0.1px;">Make a copy</div>
<div style="position:absolute;left:121.50px;top:208.28px;font-size:15.2px;line-height:15.2px;color:#202124;font-weight:normal;white-space:nowrap;font-family:'Liberation Sans', sans-serif;-webkit-text-stroke:0.25px currentColor;letter-spacing:-0.1px;">Email</div>
<div style="position:absolute;left:121.50px;top:241.78px;font-size:15.2px;line-height:15.2px;color:#202124;font-weight:normal;white-space:nowrap;font-family:'Liberation Sans', sans-serif;-webkit-text-stroke:0.25px currentColor;letter-spacing:-0.1px;">Download</div>
<div style="position:absolute;left:121.50px;top:275.28px;font-size:15.2px;line-height:15.2px;color:#202124;font-weight:normal;white-space:nowrap;font-family:'Liberation Sans', sans-serif;-webkit-text-stroke:0.25px currentColor;letter-spacing:-0.1px;">Make available offline</div>
<div style="position:absolute;left:121.50px;top:359.78px;font-size:15.2px;line-height:15.2px;color:#202124;font-weight:normal;white-space:nowrap;font-family:'Liberation Sans', sans-serif;-webkit-text-stroke:0.25px currentColor;letter-spacing:-0.1px;">Rename</div>
<div style="position:absolute;left:121.50px;top:394.08px;font-size:15.2px;line-height:15.2px;color:#202124;font-weight:normal;white-space:nowrap;font-family:'Liberation Sans', sans-serif;-webkit-text-stroke:0.25px currentColor;letter-spacing:-0.1px;">Move</div>
<div style="position:absolute;left:121.50px;top:427.28px;font-size:15.2px;line-height:15.2px;color:#202124;font-weight:normal;white-space:nowrap;font-family:'Liberation Sans', sans-serif;-webkit-text-stroke:0.25px currentColor;letter-spacing:-0.1px;">Add shortcut to Drive</div>
<div style="position:absolute;left:121.50px;top:460.68px;font-size:15.2px;line-height:15.2px;color:#202124;font-weight:normal;white-space:nowrap;font-family:'Liberation Sans', sans-serif;-webkit-text-stroke:0.25px currentColor;letter-spacing:-0.1px;">Move to trash</div>
<div style="position:absolute;right:692.00px;top:89.78px;font-size:15.2px;line-height:15.2px;color:#5f6368;font-weight:normal;white-space:nowrap;font-family:'Liberation Sans', sans-serif;-webkit-text-stroke:0.25px currentColor;letter-spacing:-0.1px;">Ctrl+O</div>
<div style="position:absolute;left:119.00px;top:189.20px;width:172.00px;height:1.20px;background:#dadce0;"></div>
<div style="position:absolute;left:119.00px;top:342.10px;width:172.00px;height:1.20px;background:#dadce0;"></div>
<div style="position:absolute;left:119.00px;top:494.20px;width:172.00px;height:1.20px;background:#dadce0;"></div>
<svg style="position:absolute;left:266.5px;top:212.2px" width="8" height="8" viewBox="0 0 8 8"><path d="M0.5 0.5L7.5 4L0.5 7.5Z" fill="#5f6368"/></svg>
<svg style="position:absolute;left:266.5px;top:245.7px" width="8" height="8" viewBox="0 0 8 8"><path d="M0.5 0.5L7.5 4L0.5 7.5Z" fill="#5f6368"/></svg>
<svg style="position:absolute;left:266.5px;top:312.5px" width="8" height="8" viewBox="0 0 8 8"><path d="M0.5 0.5L7.5 4L0.5 7.5Z" fill="#5f6368"/></svg>
<div style="position:absolute;left:84.50px;top:304.00px;width:202.90px;height:25.50px;background:#f1f3f4;"></div>
<div style="position:absolute;left:121.50px;top:308.58px;font-size:15.2px;line-height:15.2px;color:#202124;font-weight:normal;white-space:nowrap;font-family:'Liberation Sans', sans-serif;-webkit-text-stroke:0.25px currentColor;letter-spacing:-0.1px;">Version history</div>
<svg style="position:absolute;left:266.5px;top:312.5px" width="8" height="8" viewBox="0 0 8 8"><path d="M0.5 0.5L7.5 4L0.5 7.5Z" fill="#5f6368"/></svg>
<svg style="position:absolute;left:92.5px;top:392px" width="19.2" height="19.2" viewBox="0 0 24 24"><path fill="#484b4f" d="M20 6h-8l-2-2H4c-1.1 0-1.99.9-1.99 2L2 18c0 1.1.9 2 2 2h16c1.1 0 2-.9 2-2V8c0-1.1-.9-2-2-2zm0 12H4V6h5.17l2 2H20v10zm-7.84-6H8v2h4.16l-1.59 1.59L11.99 17 16 13.01 11.99 9l-1.41 1.41L12.16 12z"/></svg>
<svg style="position:absolute;left:92px;top:424px" width="22" height="21" viewBox="0 0 22 21"><path fill="#484b4f" d="M9.6 4H13.6L17.6 10.6L13.7 11.2ZM7.8 5.8L10 9.6L5.5 17.6L3.3 13.6ZM10.4 14.3L12.5 17.8H8.2Z"/><path d="M13.3 15.5H19.8M16.55 12.3V18.8" stroke="#484b4f" stroke-width="1.6"/></svg>
<svg style="position:absolute;left:92.5px;top:458.8px" width="19.2" height="19.2" viewBox="0 0 24 24"><path fill="#484b4f" d="M6 19c0 1.1.9 2 2 2h8c1.1 0 2-.9 2-2V7H6v12zM19 4h-3.5l-1-1h-5l-1 1H5v2h14V4z"/></svg>
<div style="position:absolute;left:290.00px;top:300.00px;width:328.00px;height:81.00px;background:#fff;border-radius:4px;box-shadow:0 2px 6px 2px rgba(60,64,67,.15),0 1px 2px rgba(60,64,67,.3);"></div>
<div style="position:absolute;left:331.70px;top:317.08px;font-size:15.2px;line-height:15.2px;color:#202124;font-weight:normal;white-space:nowrap;font-family:'Liberation Sans', sans-serif;-webkit-text-stroke:0.25px currentColor;letter-spacing:-0.1px;">Name current version</div>
<div style="position:absolute;left:294.00px;top:347.40px;width:321.30px;height:23.80px;background:#eceef1;"></div>
<div style="position:absolute;left:331.70px;top:351.18px;font-size:15.2px;line-height:15.2px;color:#202124;font-weight:normal;white-space:nowrap;font-family:'Liberation Sans', sans-serif;-webkit-text-stroke:0.25px currentColor;letter-spacing:-0.1px;">See version history</div>
<div style="position:absolute;right:365.50px;top:351.01px;font-size:15.4px;line-height:15.4px;color:#5f6368;font-weight:normal;white-space:nowrap;font-family:'Liberation Sans', sans-serif;-webkit-text-stroke:0.25px currentColor;letter-spacing:-0.05px;">Ctrl+Alt+Shift+H</div>
<div style="position:absolute;left:76.00px;top:46.00px;width:47.00px;height:33.00px;border:3.6px solid #f50a0a;box-shadow:0 0 1.5px rgba(0,0,0,.55),inset 0 0 1.5px rgba(0,0,0,.55);"></div>
<div style="position:absolute;left:80.50px;top:300.00px;width:210.90px;height:33.50px;border:3.8px solid #f50a0a;box-shadow:0 0 1.5px rgba(0,0,0,.55),inset 0 0 1.5px rgba(0,0,0,.55);"></div>
<div style="position:absolute;left:290.00px;top:343.40px;width:329.30px;height:31.80px;border:3.8px solid #f50a0a;box-shadow:0 0 1.5px rgba(0,0,0,.55),inset 0 0 1.5px rgba(0,0,0,.55);"></div>
<div style="position:absolute;left:111.50px;top:26.50px;width:31px;height:31px;border-radius:50%;background:#000;"></div>
<div style="position:absolute;left:-73.00px;width:400px;text-align:center;top:29.20px;font-size:24px;line-height:24px;color:#fff;font-weight:bold;white-space:nowrap;font-family:'Liberation Serif', serif;">1</div>
<div style="position:absolute;left:278.00px;top:280.40px;width:31px;height:31px;border-radius:50%;background:#000;"></div>
<div style="position:absolute;left:93.50px;width:400px;text-align:center;top:286.10px;font-size:20px;line-height:20px;color:#fff;font-weight:bold;white-space:nowrap;font-family:'Liberation Sans', sans-serif;">2</div>
<div style="position:absolute;left:606.10px;top:323.70px;width:31px;height:31px;border-radius:50%;background:#000;"></div>
<div style="position:absolute;left:421.60px;width:400px;text-align:center;top:329.40px;font-size:20px;line-height:20px;color:#fff;font-weight:bold;white-space:nowrap;font-family:'Liberation Sans', sans-serif;">3</div>
</div>
<svg style="position:absolute;left:884px;top:3.3px" width="71" height="18.5" viewBox="0 0 71 18.5"><path d="M5 0H71V18.5H5L0.5 11V7.5Z" fill="#d6d6d6"/></svg>
<div style="position:absolute;left:888.3px;top:6.9px;font-size:10.5px;line-height:10.5px;font-weight:bold;white-space:nowrap;letter-spacing:-0.45px;-webkit-text-stroke:0.35px currentColor;"><span style="color:#e98f0e">TECH</span><span style="color:#111">JUNKIE</span></div>
<svg style="position:absolute;left:864.8px;top:3px" width="19.4" height="19" viewBox="0 0 19.4 19"><circle cx="9.6" cy="9.1" r="9.1" fill="#1b2138" stroke="#555" stroke-width="0.7"/><path d="M2 3.7H11V6.5H8.5V15.2H5.3V6.5H2Z" fill="#f6c811"/><path d="M13.9 3.7H17.5V11.8C17.5 14.3 16.1 15.6 13.5 15.6H10.4V12.7H12.7C13.5 12.7 13.9 12.3 13.9 11.5Z" fill="#fff"/></svg>
</body></html>
